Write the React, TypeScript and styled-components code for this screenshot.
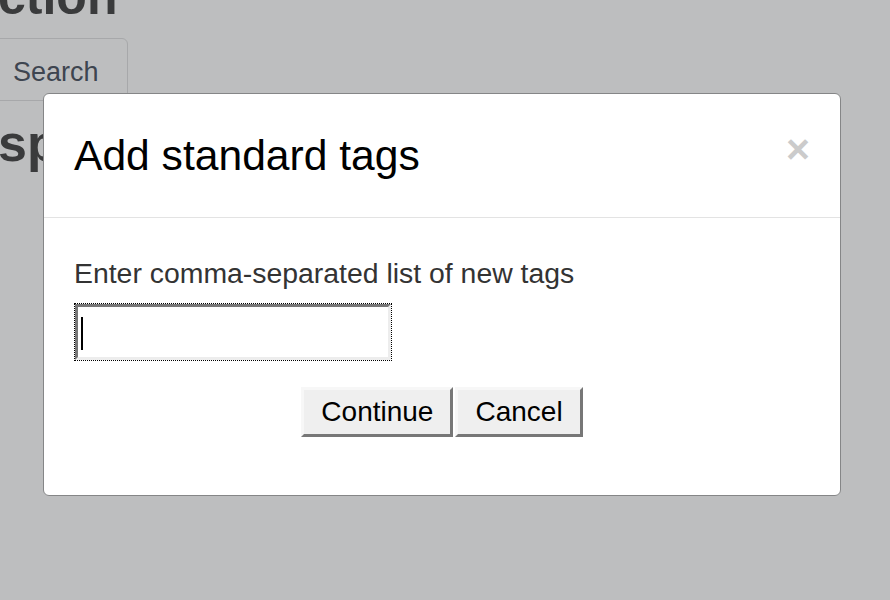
import styled, { createGlobalStyle } from "styled-components"

const GlobalStyle = createGlobalStyle`
  html, body {
    margin: 0;
    padding: 0;
  }
  body {
    background: #bdbebf;
    font-family: "Liberation Sans", Arial, Helvetica, sans-serif;
    overflow: hidden;
  }
`

const Page = styled.div`
  height: 600px;
  overflow: hidden;
  color: #3a3b3c;
`

const PageTitle = styled.h1`
  margin: -28px 0 0 -2px;
  font-size: 50px;
  line-height: 50px;
  font-weight: bold;
`

const Tabs = styled.div`
  display: flex;
  margin-top: 16px;
`

const Tab = styled.div`
  margin-left: -10px;
  padding: 19px 28px 13px 22px;
  font-size: 27px;
  line-height: 29px;
  color: #3e4550;
  border: 1px solid #a7a8aa;
  border-radius: 0 6px 0 0;
`

const SectionTitle = styled.h2`
  margin: 14px 0 0 -2px;
  font-size: 52px;
  line-height: 56px;
  font-weight: bold;
`

const Backdrop = styled.div`
  position: fixed;
  inset: 0;
  display: flex;
  align-items: flex-start;
`

const Dialog = styled.div`
  margin: 93px 0 0 43px;
  width: 798px;
  box-sizing: border-box;
  background: #fff;
  border: 1px solid #858687;
  border-radius: 6px;
`

const Header = styled.div`
  display: flex;
  justify-content: space-between;
  align-items: flex-start;
  padding: 38px 30px 39px;
  border-bottom: 1px solid #e3e3e3;
`

const Title = styled.h4`
  margin: 0;
  font-size: 42.6px;
  line-height: 46px;
  font-weight: normal;
  color: #000;
`

const Close = styled.button`
  margin-top: -6px;
  padding: 0;
  background: none;
  border: none;
  font-family: inherit;
  font-size: 41px;
  line-height: 46px;
  font-weight: bold;
  color: #cbcbcb;
  cursor: pointer;
`

const Body = styled.div`
  padding: 39px 30px 58px;
`

const Label = styled.div`
  font-size: 28.4px;
  line-height: 32px;
  color: #333;
`

const InputWrap = styled.div`
  position: relative;
  margin-top: 15px;
  width: 316px;
  outline: 1px dotted #000;
  margin-left: 1px;
`

const TagsInput = styled.input`
  display: block;
  box-sizing: border-box;
  width: 316px;
  height: 56px;
  margin: 0;
  padding: 0 6px;
  border: 3px solid;
  border-color: #777 #ededed #ededed #777;
  background: #fff;
  font-family: inherit;
  font-size: 28px;
  outline: none;
`

const Caret = styled.span`
  position: absolute;
  left: 6px;
  top: 13px;
  width: 2px;
  height: 33px;
  background: #000;
`

const Actions = styled.div`
  display: flex;
  justify-content: center;
  gap: 2px;
  margin-top: 27px;
`

const Button = styled.button`
  box-sizing: border-box;
  height: 50px;
  margin: 0;
  padding: 0 17px;
  border: 3px solid;
  border-color: #f7f7f7 #777 #777 #f7f7f7;
  background: #efefef;
  font-family: inherit;
  font-size: 28px;
  color: #000;
  cursor: pointer;
`

export default function App() {
  return (
    <>
      <GlobalStyle />
      <Page>
        <PageTitle>ction</PageTitle>
        <Tabs>
          <Tab>Search</Tab>
        </Tabs>
        <SectionTitle>sponses</SectionTitle>
      </Page>
      <Backdrop>
        <Dialog role="dialog">
          <Header>
            <Title>Add standard tags</Title>
            <Close aria-label="Close">×</Close>
          </Header>
          <Body>
            <Label>Enter comma-separated list of new tags</Label>
            <InputWrap>
              <TagsInput type="text" />
              <Caret />
            </InputWrap>
            <Actions>
              <Button>Continue</Button>
              <Button>Cancel</Button>
            </Actions>
          </Body>
        </Dialog>
      </Backdrop>
    </>
  )
}
